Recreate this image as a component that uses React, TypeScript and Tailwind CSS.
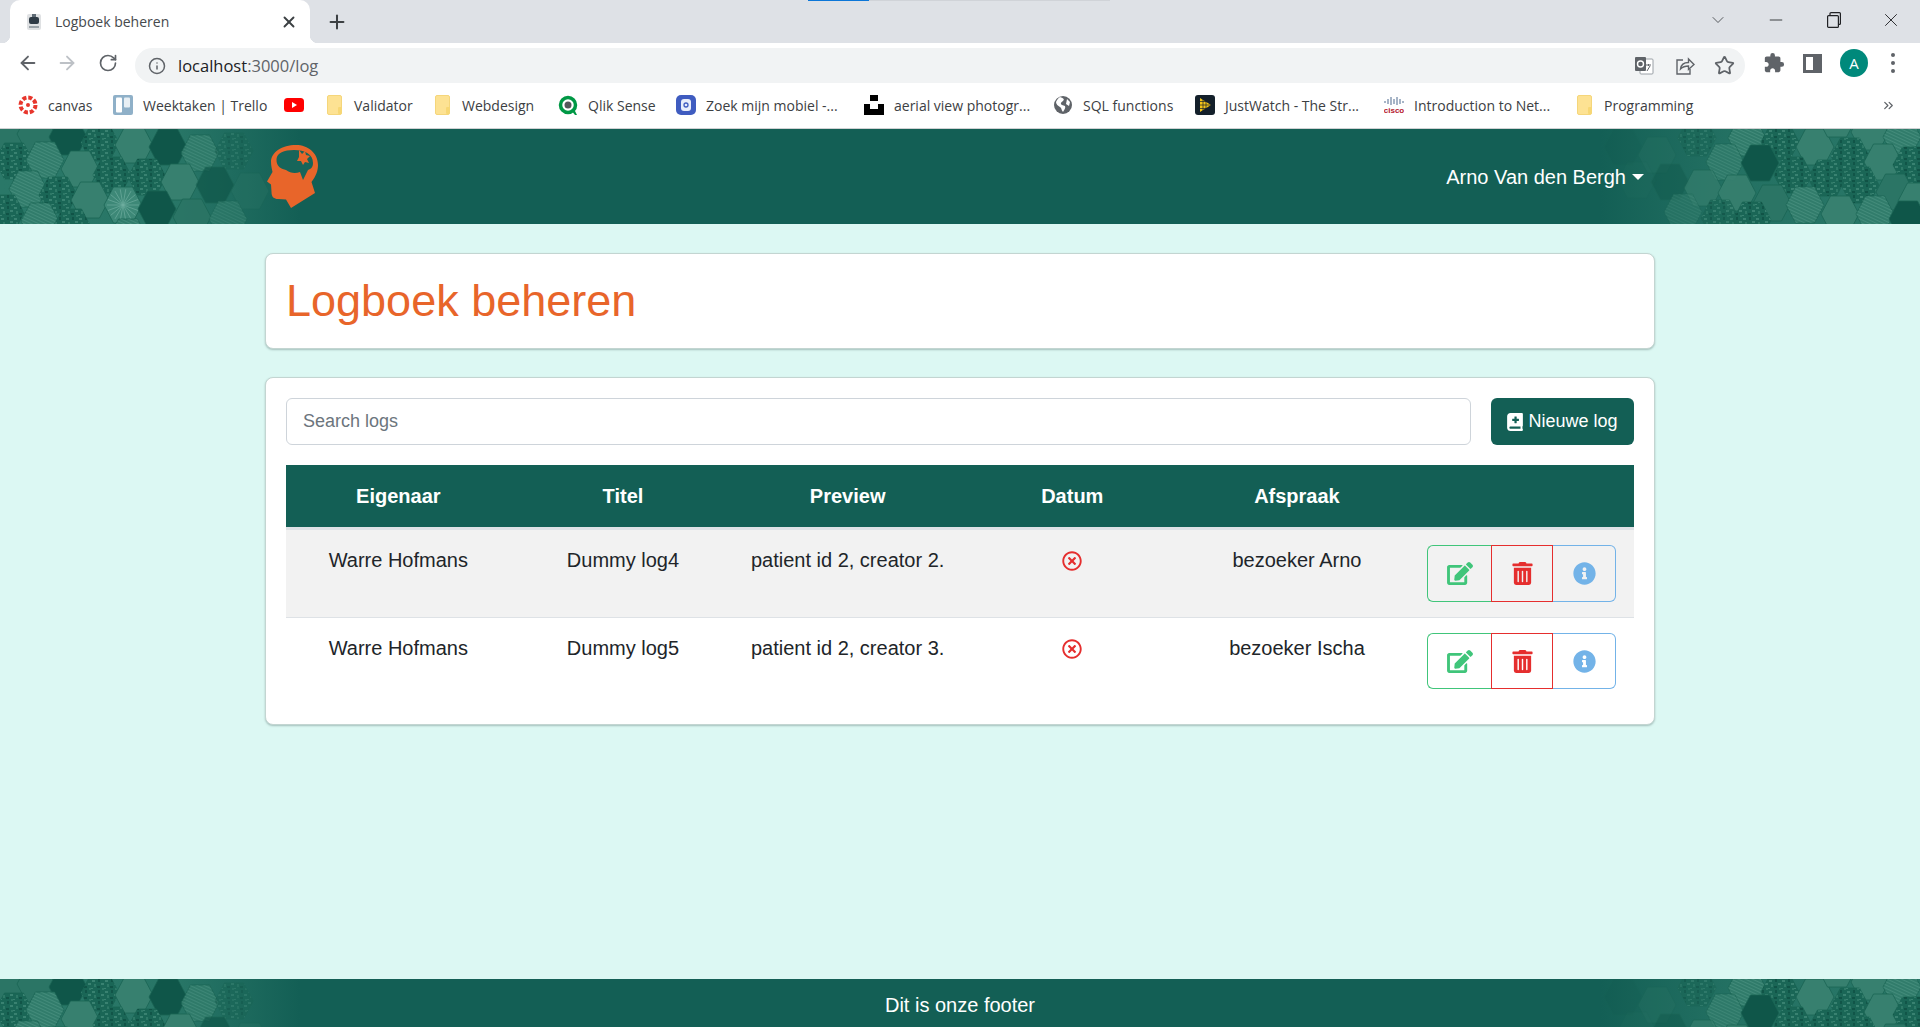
import { ArrowLeft, ArrowRight, RotateCw, Star, Plus, X, ChevronDown, Minus, ChevronsRight, Info } from 'lucide-react';
import { FaBookMedical, FaEdit, FaInfoCircle, FaRegTimesCircle, FaTrashAlt } from 'react-icons/fa';

type Hex = { x: number; y: number; kind: 'light' | 'mid' | 'dark' | 'stripe' | 'noise' | 'radial' };

const leftHexes: Hex[] = [
  { x: 8, y: 3, kind: 'mid' }, { x: 36, y: 5, kind: 'mid' }, { x: 68, y: 8, kind: 'dark' }, { x: 100, y: 14, kind: 'noise' },
  { x: 134, y: 16, kind: 'light' }, { x: 168, y: 18, kind: 'dark' }, { x: 200, y: 24, kind: 'stripe' }, { x: 234, y: 22, kind: 'noise' },
  { x: 14, y: 32, kind: 'noise' }, { x: 45, y: 31, kind: 'stripe' }, { x: 80, y: 40, kind: 'light' }, { x: 112, y: 46, kind: 'noise' },
  { x: 147, y: 48, kind: 'noise' }, { x: 180, y: 53, kind: 'light' }, { x: 215, y: 56, kind: 'dark' }, { x: 250, y: 62, kind: 'mid' },
  { x: 28, y: 60, kind: 'stripe' }, { x: 58, y: 66, kind: 'noise' }, { x: 90, y: 71, kind: 'light' }, { x: 123, y: 76, kind: 'radial' },
  { x: 157, y: 80, kind: 'dark' }, { x: 192, y: 88, kind: 'mid' }, { x: 228, y: 90, kind: 'stripe' }, { x: 5, y: 84, kind: 'noise' },
  { x: 40, y: 92, kind: 'stripe' }, { x: 72, y: 98, kind: 'noise' }, { x: 128, y: 108, kind: 'stripe' },
];

const rightHexes: Hex[] = [
  { x: 1623, y: 18, kind: 'dark' }, { x: 1657, y: 26, kind: 'mid' }, { x: 1697, y: 9, kind: 'noise' }, { x: 1747, y: 9, kind: 'stripe' },
  { x: 1780, y: 13, kind: 'noise' }, { x: 1815, y: 18, kind: 'light' }, { x: 1837, y: -10, kind: 'light' }, { x: 1870, y: 3, kind: 'light' },
  { x: 1902, y: 8, kind: 'stripe' }, { x: 1725, y: 33, kind: 'stripe' }, { x: 1760, y: 34, kind: 'dark' }, { x: 1850, y: 27, kind: 'noise' },
  { x: 1883, y: 33, kind: 'light' }, { x: 1912, y: 36, kind: 'noise' }, { x: 1637, y: 51, kind: 'mid' }, { x: 1670, y: 53, kind: 'dark' },
  { x: 1703, y: 59, kind: 'light' }, { x: 1737, y: 64, kind: 'light' }, { x: 1793, y: 46, kind: 'noise' }, { x: 1827, y: 49, kind: 'noise' },
  { x: 1860, y: 56, kind: 'noise' }, { x: 1895, y: 63, kind: 'mid' }, { x: 1917, y: 72, kind: 'light' }, { x: 1772, y: 74, kind: 'mid' },
  { x: 1805, y: 76, kind: 'stripe' }, { x: 1840, y: 85, kind: 'light' }, { x: 1875, y: 85, kind: 'stripe' }, { x: 1908, y: 90, kind: 'dark' },
  { x: 1683, y: 83, kind: 'stripe' }, { x: 1720, y: 89, kind: 'noise' }, { x: 1752, y: 91, kind: 'noise' },
];

const fills = { light: '#37806f', mid: '#2b7565', dark: '#0f5649', stripe: '#317c6b', noise: '#1a6656', radial: '#3d8877' };

function hexPoints(x: number, y: number) {
  const r = 19;
  const h = 18;
  return [[x - r, y], [x - r / 2, y - h], [x + r / 2, y - h], [x + r, y], [x + r / 2, y + h], [x - r / 2, y + h]]
    .map((p) => p.join(','))
    .join(' ');
}

// the patchwork of hexagons that fades out at both ends of the navbar and footer
function HexBand({ side }: { side: 'left' | 'right' }) {
  const left = side === 'left';
  const originX = left ? 0 : 1600;
  const hexes = left ? leftHexes : rightHexes;
  const id = `hex-${side}`;
  return (
    <svg
      width={left ? 300 : 320}
      height={96}
      viewBox={`${originX} 0 ${left ? 300 : 320} 96`}
      className={left ? 'absolute top-0 left-0' : 'absolute top-0 right-0'}
    >
      <defs>
        <linearGradient id={`${id}-wash`} x1="0" x2="1" y1="0" y2="0">
          <stop offset="0" stopColor="#2a7868" stopOpacity={left ? 1 : 0} />
          <stop offset={left ? '0.6' : '0.4'} stopColor="#2a7868" stopOpacity={left ? 0.9 : 0.7} />
          <stop offset="1" stopColor="#2a7868" stopOpacity={left ? 0 : 1} />
        </linearGradient>
        <pattern id={`${id}-stripe`} width="3" height="3" patternUnits="userSpaceOnUse" patternTransform="rotate(25)">
          <rect width="3" height="1" fill="#6fb0a0" opacity="0.3" />
        </pattern>
        <pattern id={`${id}-noise`} width="13" height="11" patternUnits="userSpaceOnUse">
          <rect x="1" y="1" width="3" height="2" fill="#4d9583" />
          <rect x="7" y="0" width="2" height="3" fill="#0b4a3e" />
          <rect x="10" y="4" width="3" height="2" fill="#4d9583" />
          <rect x="3" y="5" width="2" height="3" fill="#3c8573" />
          <rect x="6" y="7" width="3" height="2" fill="#0a463b" />
          <rect x="0" y="9" width="2" height="1" fill="#4d9583" />
          <rect x="11" y="9" width="2" height="2" fill="#3c8573" />
        </pattern>
      </defs>
      <rect x={originX} y="0" width={left ? 300 : 320} height="96" fill={`url(#${id}-wash)`} />
      {hexes.map((hex) => {
        const fade = left ? (285 - hex.x) / 100 : (hex.x - 1620) / 130;
        const opacity = Math.max(0.12, Math.min(1, fade));
        const points = hexPoints(hex.x, hex.y);
        return (
          <g key={`${hex.x}-${hex.y}`} opacity={opacity}>
            <polygon points={points} fill={fills[hex.kind]} stroke="#1a6454" strokeWidth="0.8" />
            {hex.kind === 'stripe' && <polygon points={points} fill={`url(#${id}-stripe)`} />}
            {hex.kind === 'noise' && <polygon points={points} fill={`url(#${id}-noise)`} opacity="0.6" />}
            {hex.kind === 'radial' &&
              Array.from({ length: 18 }).map((_, i) => {
                const a = (i * Math.PI) / 9;
                return (
                  <line
                    key={i}
                    x1={hex.x}
                    y1={hex.y}
                    x2={hex.x + Math.cos(a) * 16}
                    y2={hex.y + Math.sin(a) * 16}
                    stroke="#6fae9f"
                    strokeWidth="0.7"
                  />
                );
              })}
          </g>
        );
      })}
    </svg>
  );
}

function HeadLogo() {
  return (
    <svg width="51" height="63" viewBox="0 0 51 63" className="block shrink-0">
      <path
        fill="#e8652a"
        d="M24 63 L48 48 L44.5 37 C49 31 51 26 51 20 C51 8 41 0 29 0 C15 0 4 7 4 17 C4 21 5 24 5.5 27 L0 36.5 L4 39.5 L4.5 47 C4.5 52 7 54 11 54 L19 54.5 Z"
      />
      <path
        fill="#17655a"
        d="M9.5 14 C10 8 17 5 27 5 C38 5 46 9 46 18 C46 22 44 24 41 25 L36 35 L33 27 C28 29 23 28 19 25 C15 24 9 22 9.5 14 Z"
      />
      <path
        fill="#e8652a"
        d="M32 5 L35 9 L38 6 L39 10 L43 11 L40 14 L42 18 L38 17 L36 20 L34 16 L30 16 L32 12 Z"
      />
    </svg>
  );
}

const FolderIcon = () => (
  <svg width="15" height="20" viewBox="0 0 15 20">
    <rect x="0.5" y="0.5" width="14" height="19" rx="1.5" fill="#fde293" stroke="#f5d67b" />
    <rect x="11" y="12" width="3.5" height="7" rx="1" fill="#f7d774" />
  </svg>
);

const favicons = {
  canvas: (
    <svg width="20" height="20" viewBox="0 0 20 20">
      <circle cx="10" cy="10" r="7.5" fill="none" stroke="#e7362c" strokeWidth="4" strokeDasharray="4 1.9" />
      <circle cx="10" cy="10" r="2" fill="#e7362c" />
    </svg>
  ),
  trello: (
    <svg width="20" height="20" viewBox="0 0 20 20">
      <rect width="20" height="20" rx="2" fill="#8fb0c8" />
      <rect x="3" y="2.5" width="6" height="15" rx="1" fill="#fff" />
      <rect x="11" y="2.5" width="6" height="10" rx="1" fill="#e8eff4" />
    </svg>
  ),
  youtube: (
    <svg width="20" height="20" viewBox="0 0 20 20">
      <rect y="3" width="20" height="14" rx="3.5" fill="#f00" />
      <path d="M8 7l5 3-5 3z" fill="#fff" />
    </svg>
  ),
  qlik: (
    <svg width="20" height="20" viewBox="0 0 20 20">
      <circle cx="10" cy="10" r="7.5" fill="#fff" stroke="#009845" strokeWidth="3.5" />
      <circle cx="10" cy="10" r="3.5" fill="#54565a" />
      <path d="M13 15l4 5h2l-3-6z" fill="#009845" />
    </svg>
  ),
  zoek: (
    <svg width="20" height="20" viewBox="0 0 20 20">
      <rect width="20" height="20" rx="5" fill="#3f5cc0" />
      <rect x="5" y="4" width="10" height="12" rx="3" fill="#e8edfa" />
      <circle cx="10" cy="10" r="2" fill="none" stroke="#3f5cc0" strokeWidth="1.3" />
    </svg>
  ),
  aerial: (
    <svg width="20" height="20" viewBox="0 0 20 20">
      <path d="M6 0h8v6H6zM0 9h6v5h8V9h6v11H0z" fill="#000" />
    </svg>
  ),
  globe: (
    <svg width="20" height="20" viewBox="0 0 20 20">
      <circle cx="10" cy="10" r="9" fill="#5f6368" />
      <path d="M7 2c3 1 5 2 3 4-2 1-3 3-1 4l3 1c1 2-1 4-2 6-2-2-1-4-3-5S3 9 3 7c1-2 2-4 4-5zM14 4l3 3-1 4-3-2z" fill="#fff" />
    </svg>
  ),
  justwatch: (
    <svg width="20" height="20" viewBox="0 0 20 20">
      <rect width="20" height="20" rx="3" fill="#14202b" />
      <path d="M5 3l11 7-11 7z" fill="#f5c518" />
      <path d="M5 6.5h11M5 10h11M5 13.5h11M8 3v14M11 3v14" stroke="#14202b" strokeWidth="0.7" />
    </svg>
  ),
  cisco: (
    <svg width="20" height="20" viewBox="0 0 20 20">
      <path d="M1 6v2M4 4v5M7 2v8M10 4v5M13 2v8M16 4v5M19 6v2" stroke="#4f6b8f" strokeWidth="1" />
      <text x="10" y="18" textAnchor="middle" fontSize="8" fontWeight="700" fill="#b5162b" fontFamily="Liberation Sans, sans-serif">
        cisco
      </text>
    </svg>
  ),
};

const bookmarks = [
  { icon: favicons.canvas, label: 'canvas', width: 'w-[95px]' },
  { icon: favicons.trello, label: 'Weektaken | Trello', width: 'w-[171px]' },
  { icon: favicons.youtube, label: '', width: 'w-[40px]' },
  { icon: <FolderIcon />, label: 'Validator', width: 'w-[108px]' },
  { icon: <FolderIcon />, label: 'Webdesign', width: 'w-[126px]' },
  { icon: favicons.qlik, label: 'Qlik Sense', width: 'w-[118px]' },
  { icon: favicons.zoek, label: 'Zoek mijn mobiel -...', width: 'w-[188px]' },
  { icon: favicons.aerial, label: 'aerial view photogr...', width: 'w-[189px]' },
  { icon: favicons.globe, label: 'SQL functions', width: 'w-[142px]' },
  { icon: favicons.justwatch, label: 'JustWatch - The Str...', width: 'w-[189px]' },
  { icon: favicons.cisco, label: 'Introduction to Net...', width: 'w-[190px]' },
  { icon: <FolderIcon />, label: 'Programming', width: 'w-[130px]' },
];

function BrowserChrome() {
  return (
    <div className="font-['Open_Sans',sans-serif] text-[#3c4043]">
      <div className="relative flex h-[43px] items-start bg-[#dee1e6]">
        <div className="absolute top-0 left-[808px] h-px w-[61px] bg-[#0b76d8]" />
        <div className="absolute top-0 left-[869px] h-px w-[241px] bg-[#d0d3d8]" />
        <div className="relative ml-[10px] flex h-[43px] w-[300px] items-center rounded-t-[10px] bg-white pr-[12px] pl-[16px]">
          <div className="absolute bottom-0 -left-2 h-2 w-2 bg-[radial-gradient(circle_at_0_0,#dee1e6_8px,#ffffff_8.5px)]" />
          <div className="absolute -right-2 bottom-0 h-2 w-2 bg-[radial-gradient(circle_at_100%_0,#dee1e6_8px,#ffffff_8.5px)]" />
          <svg width="16" height="18" viewBox="0 0 16 18" className="shrink-0">
            <rect x="1" y="1" width="14" height="16" rx="2" fill="#dfe1e3" />
            <rect x="3" y="4" width="10" height="7" rx="2" fill="#2f3b46" />
            <rect x="6" y="1" width="4" height="3" fill="#5f6b75" />
            <rect x="3" y="13" width="10" height="2" fill="#9aa2a8" />
          </svg>
          <span className="ml-[13px] flex-1 text-[14px] text-[#45494d]">Logboek beheren</span>
          <X size={18} strokeWidth={2.5} className="text-[#3c4043]" />
        </div>
        <Plus size={22} strokeWidth={2.2} className="mt-[11px] ml-[16px] text-[#3c4043]" />
        <div className="ml-auto flex items-center pt-[9px] pr-[18px] text-[#3c4043]">
          <ChevronDown size={20} strokeWidth={1} className="mr-[38px]" />
          <Minus size={20} strokeWidth={1.2} className="mr-[41px]" />
          <svg width="14" height="16" viewBox="0 0 14 16" fill="none" stroke="#202124" strokeWidth="1.2" className="mr-[39px]">
            <rect x="0.6" y="3.6" width="10.8" height="11.8" rx="1" />
            <path d="M3 3.5V1.6a1 1 0 0 1 1-1h8.4a1 1 0 0 1 1 1v9.8a1 1 0 0 1-1 1h-1" />
          </svg>
          <X size={22} strokeWidth={1} className="text-[#202124]" />
        </div>
      </div>

      <div className="flex h-[41px] items-center bg-white pb-px">
        <ArrowLeft size={22} strokeWidth={2} className="ml-[17px] text-[#5f6368]" />
        <ArrowRight size={22} strokeWidth={2} className="ml-[17px] text-[#bdc1c6]" />
        <RotateCw size={20} strokeWidth={2} className="ml-[20px] text-[#5f6368]" />
        <div className="mt-[5px] ml-[17px] flex h-[35px] w-[1610px] items-center rounded-full bg-[#f1f3f4]">
          <Info size={18} strokeWidth={2} className="ml-[13px] text-[#5f6368]" />
          <span className="mt-px ml-[12px] text-[16.500px]">
            <span className="text-[#202124]">localhost</span>
            <span className="text-[#5f6368]">:3000/log</span>
          </span>
          <div className="ml-auto flex items-center pr-[10px] text-[#5f6368]">
            <svg width="20" height="20" viewBox="0 0 20 20" className="mr-[21px]">
              <rect x="6" y="3" width="13" height="15" rx="1" fill="#fff" stroke="#9aa0a6" />
              <rect x="1" y="1" width="11" height="14" rx="1" fill="#5f6368" />
              <circle cx="6.5" cy="8" r="3" fill="none" stroke="#fff" strokeWidth="1.4" />
              <path d="M12 9h5M14.5 8v2M13 15l3-5" stroke="#5f6368" strokeWidth="1" fill="none" />
            </svg>
            <svg width="20" height="20" viewBox="0 0 20 20" fill="none" stroke="#5f6368" strokeWidth="1.4" className="mr-[19px]">
              <path d="M8 4H2v14h13v-5" />
              <path d="M5.500 13c.5-4 3.500-6.500 8-6.500V3l5.500 5.500-5.500 5V10c-3.500 0-6 1-8 3z" />
            </svg>
            <Star size={21} strokeWidth={2} />
          </div>
        </div>
        <div className="ml-[18px] flex items-center text-[#5f6368]">
          <svg width="22" height="22" viewBox="0 0 24 24" fill="#5f6368">
            <path d="M20.500 11H19V7c0-1.100-.9-2-2-2h-4V3.500a2.500 2.500 0 0 0-5 0V5H4c-1.100 0-2 .9-2 2v3.800h1.500c1.500 0 2.700 1.200 2.700 2.700s-1.200 2.700-2.700 2.700H2V20c0 1.100.9 2 2 2h3.800v-1.500c0-1.500 1.200-2.700 2.700-2.700s2.700 1.200 2.700 2.700V22H17c1.100 0 2-.9 2-2v-4h1.500a2.500 2.500 0 0 0 0-5z" />
          </svg>
          <div className="ml-[18px] flex h-[19px] w-[19px] items-center border-[3px] border-[#5f6368] bg-white">
            <div className="ml-auto h-full w-[6px] bg-[#5f6368]" />
          </div>
          <div className="ml-[18px] flex h-[28px] w-[28px] items-center justify-center rounded-full bg-[#00897b] text-[15px] text-white">A</div>
          <div className="ml-[23px] flex flex-col gap-[4px]">
            <div className="h-1 w-1 rounded-full bg-[#5f6368]" />
            <div className="h-1 w-1 rounded-full bg-[#5f6368]" />
            <div className="h-1 w-1 rounded-full bg-[#5f6368]" />
          </div>
        </div>
      </div>

      <div className="flex h-[45px] items-center border-b border-[#cfd1d3] bg-white pb-[2px] pl-[18px] text-[14px] text-[#3c4043]">
        {bookmarks.map((b, i) => (
          <div key={i} className={`flex shrink-0 items-center gap-[10px] ${b.width}`}>
            <div className="flex w-5 shrink-0 justify-center">{b.icon}</div>
            {b.label && <span className="whitespace-nowrap">{b.label}</span>}
          </div>
        ))}
        <ChevronsRight size={15} className="ml-[177px] text-[#5f6368]" />
      </div>
    </div>
  );
}

const logs = [
  { owner: 'Warre Hofmans', title: 'Dummy log4', preview: 'patient id 2, creator 2.', visit: 'bezoeker Arno', rowClass: 'bg-[#f2f2f2]', cellClass: 'border-b border-[#dee2e6] py-[15px] align-top leading-[30px]', btnHeight: 'h-[57px]' },
  { owner: 'Warre Hofmans', title: 'Dummy log5', preview: 'patient id 2, creator 3.', visit: 'bezoeker Ischa', rowClass: 'bg-white', cellClass: 'py-[15px] align-top leading-[30px]', btnHeight: 'h-[56px]' },
];

function ActionButtons({ height }: { height: string }) {
  return (
    <div className={`flex w-[189px] ${height}`}>
      <button className="flex w-[64px] items-center justify-center rounded-l-[6px] border border-r-0 border-[#40c57a] text-[#40c57a]">
        <FaEdit className="h-[23px] w-[26px]" />
      </button>
      <button className="flex w-[62px] items-center justify-center border border-[#e52e2e] text-[#e52e2e]">
        <FaTrashAlt className="h-[23px] w-[21px]" />
      </button>
      <button className="flex w-[63px] items-center justify-center rounded-r-[6px] border border-l-0 border-[#73b3e8] text-[#73b3e8]">
        <FaInfoCircle className="h-[23px] w-[23px]" />
      </button>
    </div>
  );
}

export default function App() {
  return (
    <div className="flex h-screen flex-col overflow-hidden bg-[#dcf8f3] font-['Liberation_Sans',Arial,sans-serif] text-[20px] text-[#212529]">
      <BrowserChrome />

      <nav className="relative flex h-[95px] shrink-0 items-center overflow-hidden bg-[#135f55]">
        <HexBand side="left" />
        <HexBand side="right" />
        <div className="relative mx-auto flex w-[1390px] items-center justify-between pr-[11px] pl-[2px]">
          <HeadLogo />
          <div className="flex items-center gap-[6px] text-white">
            Arno Van den Bergh
            <div className="h-0 w-0 border-x-[6px] border-t-[6px] border-x-transparent border-t-white" />
          </div>
        </div>
      </nav>

      <main className="mx-auto flex w-[1390px] flex-col gap-[28px] pt-[29px]">
        <section className="rounded-[8px] border border-[#c3d5d1] bg-white px-[20px] py-[20px] shadow-[0_1px_2px_rgba(60,90,85,0.35)]">
          <h1 className="text-[45px] leading-[54px] text-[#e8652a]">Logboek beheren</h1>
        </section>

        <section className="rounded-[8px] border border-[#c3d5d1] bg-white px-[20px] pt-[20px] pb-[20px] shadow-[0_1px_2px_rgba(60,90,85,0.35)]">
          <div className="flex gap-[20px]">
            <input
              placeholder="Search logs"
              className="h-[47px] flex-1 rounded-[6px] border border-[#ced4da] px-[16px] text-[18px] placeholder:text-[#6c757d]"
            />
            <button className="flex h-[47px] w-[143px] items-center justify-center gap-[5px] rounded-[6px] bg-[#135f55] text-[18px] text-white">
              <FaBookMedical className="h-[18px] w-[16px]" />
              Nieuwe log
            </button>
          </div>

          <table className="mt-[20px] w-full table-fixed border-separate border-spacing-0 text-center">
            <thead>
              <tr className="bg-[#135f55] text-white">
                <th className="h-[65px] border-b-[3px] border-[#dee2e6]">Eigenaar</th>
                <th className="h-[65px] border-b-[3px] border-[#dee2e6]">Titel</th>
                <th className="h-[65px] border-b-[3px] border-[#dee2e6]">Preview</th>
                <th className="h-[65px] border-b-[3px] border-[#dee2e6]">Datum</th>
                <th className="h-[65px] border-b-[3px] border-[#dee2e6]">Afspraak</th>
                <th className="h-[65px] border-b-[3px] border-[#dee2e6]"></th>
              </tr>
            </thead>
            <tbody>
              {logs.map((log) => (
                <tr key={log.title} className={log.rowClass}>
                  <td className={log.cellClass}>{log.owner}</td>
                  <td className={log.cellClass}>{log.title}</td>
                  <td className={log.cellClass}>{log.preview}</td>
                  <td className={log.cellClass}>
                    <div className="flex h-[32px] items-center justify-center">
                      <FaRegTimesCircle className="h-5 w-5 text-[#e52e2e]" />
                    </div>
                  </td>
                  <td className={log.cellClass}>{log.visit}</td>
                  <td className={log.cellClass}>
                    <div className="flex justify-center">
                      <ActionButtons height={log.btnHeight} />
                    </div>
                  </td>
                </tr>
              ))}
            </tbody>
          </table>
        </section>
      </main>

      <footer className="relative mt-auto flex h-[48px] shrink-0 items-center justify-center overflow-hidden bg-[#135f55] pt-[3px] text-white">
        <HexBand side="left" />
        <HexBand side="right" />
        <span className="relative">Dit is onze footer</span>
      </footer>
    </div>
  );
}
